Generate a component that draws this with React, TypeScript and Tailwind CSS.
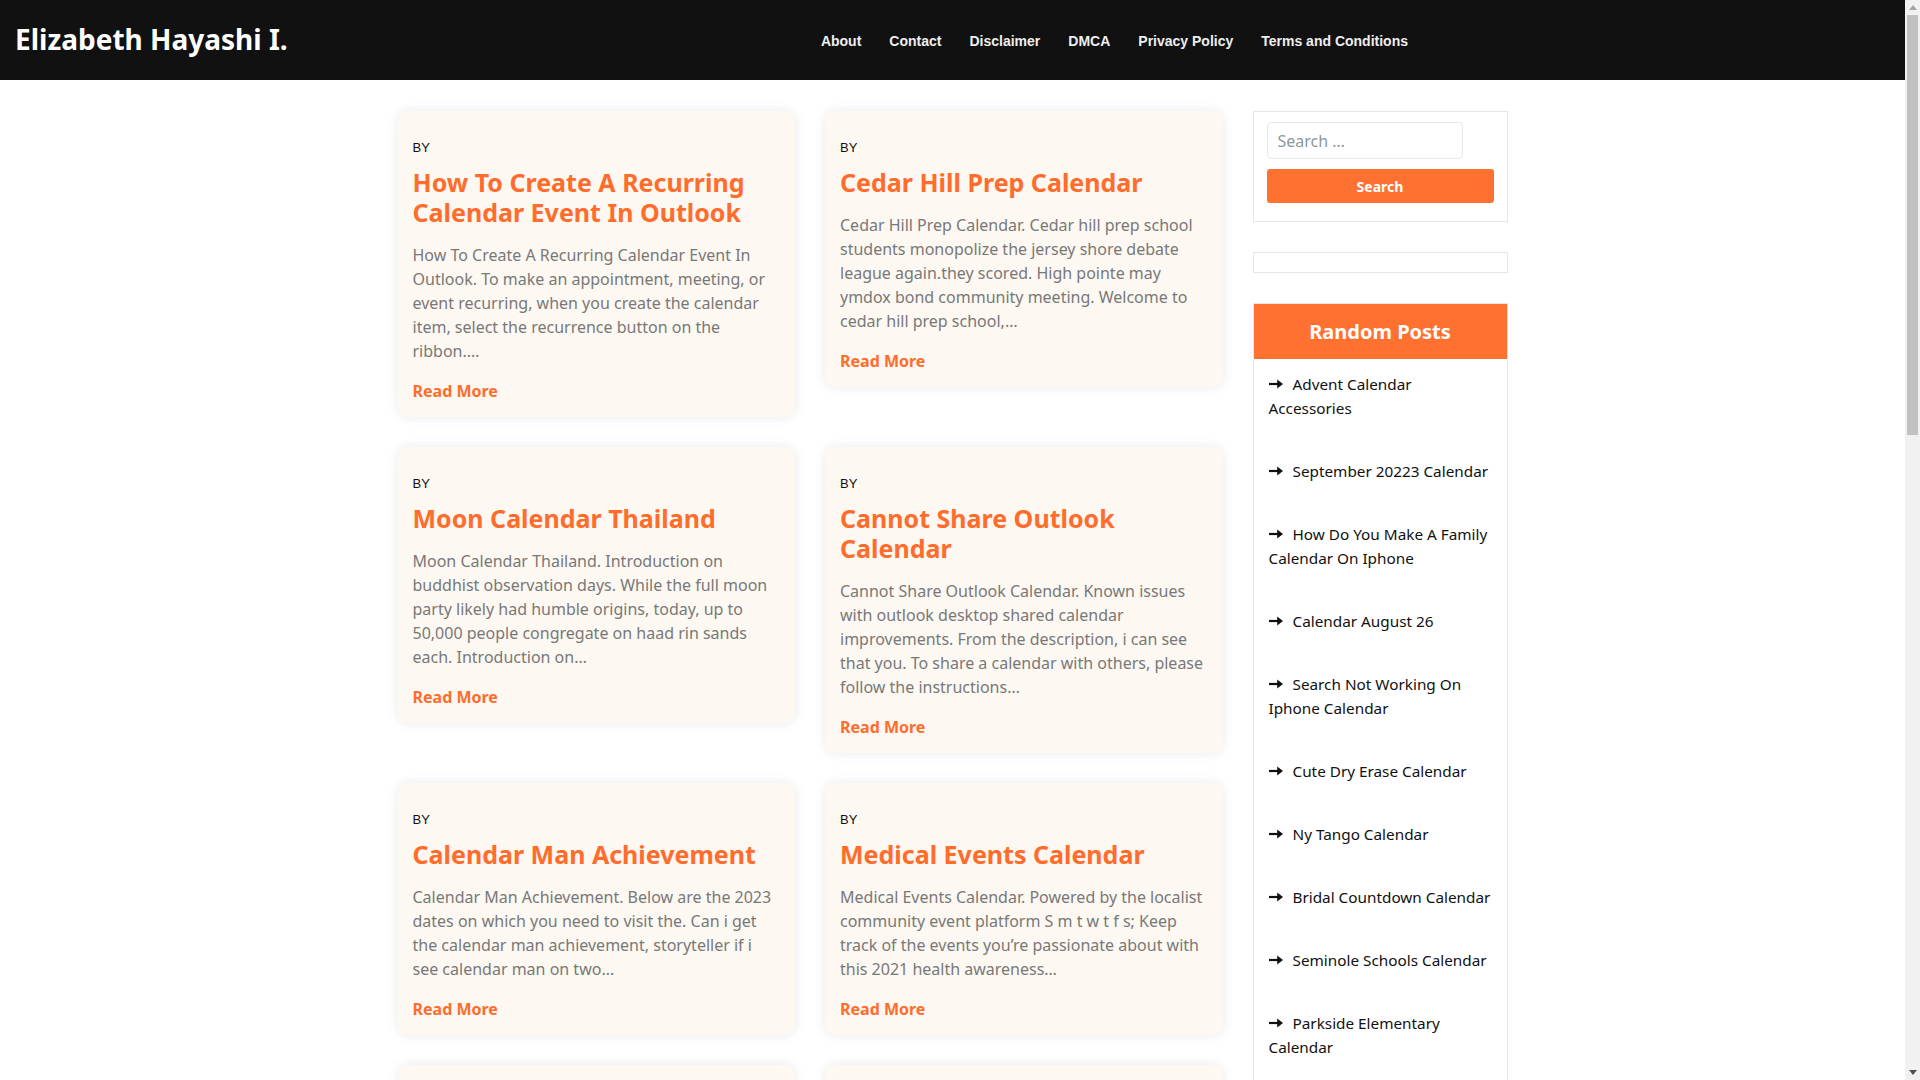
import React from 'react'

type Post = {
  title: string
  excerpt: string
}

const posts: Post[] = [
  {
    title: 'How To Create A Recurring Calendar Event In Outlook',
    excerpt:
      'How To Create A Recurring Calendar Event In Outlook. To make an appointment, meeting, or event recurring, when you create the calendar item, select the recurrence button on the ribbon.…',
  },
  {
    title: 'Cedar Hill Prep Calendar',
    excerpt:
      'Cedar Hill Prep Calendar. Cedar hill prep school students monopolize the jersey shore debate league again.they scored. High pointe may ymdox bond community meeting. Welcome to cedar hill prep school,…',
  },
  {
    title: 'Moon Calendar Thailand',
    excerpt:
      'Moon Calendar Thailand. Introduction on buddhist observation days. While the full moon party likely had humble origins, today, up to 50,000 people congregate on haad rin sands each. Introduction on…',
  },
  {
    title: 'Cannot Share Outlook Calendar',
    excerpt:
      'Cannot Share Outlook Calendar. Known issues with outlook desktop shared calendar improvements. From the description, i can see that you. To share a calendar with others, please follow the instructions…',
  },
  {
    title: 'Calendar Man Achievement',
    excerpt:
      'Calendar Man Achievement. Below are the 2023 dates on which you need to visit the. Can i get the calendar man achievement, storyteller if i see calendar man on two…',
  },
  {
    title: 'Medical Events Calendar',
    excerpt:
      'Medical Events Calendar. Powered by the localist community event platform S m t w t f s; Keep track of the events you’re passionate about with this 2021 health awareness…',
  },
  {
    title: 'Free Printable Monthly Calendar',
    excerpt:
      'Free Printable Monthly Calendar. Download and print a blank calendar for any month of the year, with holidays and week numbers included for easy planning…',
  },
  {
    title: 'School Holiday Calendar 2024',
    excerpt:
      'School Holiday Calendar 2024. Check the term dates and school holidays for the coming year so you can plan family trips and activities ahead of time…',
  },
]

const randomPosts = [
  'Advent Calendar Accessories',
  'September 20223 Calendar',
  'How Do You Make A Family Calendar On Iphone',
  'Calendar August 26',
  'Search Not Working On Iphone Calendar',
  'Cute Dry Erase Calendar',
  'Ny Tango Calendar',
  'Bridal Countdown Calendar',
  'Seminole Schools Calendar',
  'Parkside Elementary Calendar',
  'Lunar Calendar June 2024',
]

const navLinks = ['About', 'Contact', 'Disclaimer', 'DMCA', 'Privacy Policy', 'Terms and Conditions']

function ArrowIcon() {
  return (
    <svg width="14" height="10" viewBox="0 0 14 10" className="inline-block align-[1px] mr-[10px]">
      <rect x="0" y="3.9" width="9" height="2.2" fill="#111" />
      <path d="M8.2 0.6 L14 5 L8.2 9.4 Z" fill="#111" />
    </svg>
  )
}

// stand-in for the browser's classic scrollbar seen in the screenshot
function Scrollbar() {
  return (
    <div className="fixed top-0 right-0 flex h-screen w-[15px] flex-col bg-[#f1f1f1]">
      <div className="flex h-[15px] items-center justify-center">
        <svg width="8" height="5" viewBox="0 0 8 5">
          <path d="M0 5 L4 0 L8 5 Z" fill="#a3a3a3" />
        </svg>
      </div>
      <div className="mx-[2px] h-[420px] bg-[#c1c1c1]"></div>
      <div className="flex-1"></div>
      <div className="flex h-[15px] items-center justify-center">
        <svg width="8" height="5" viewBox="0 0 8 5">
          <path d="M0 0 L4 5 L8 0 Z" fill="#505050" />
        </svg>
      </div>
    </div>
  )
}

function PostCard({ post }: { post: Post }) {
  return (
    <article className="rounded-[10px] bg-[#fdf8f2] px-[15px] pt-[27px] pb-[14px] shadow-[0_0_12px_rgba(0,0,0,0.09)]">
      <div className="text-[13px] leading-[20px] text-[#111] font-['Liberation_Sans',Arial,sans-serif]">BY</div>
      <h2 className="mt-[9px] text-[25px] leading-[30px] font-bold text-[#ff6c2c]">{post.title}</h2>
      <p className="mt-[16px] text-[16px] leading-[24px] text-[#787878]">{post.excerpt}</p>
      <a href="#" className="mt-[16px] block text-[16px] leading-[24px] font-bold text-[#ff6c2c]">
        Read More
      </a>
    </article>
  )
}

export default function App() {
  return (
    <div className="min-h-screen bg-white font-['Noto_Sans',sans-serif]">
      <div className="mr-[15px]">
        {/* Header */}
        <header className="flex h-[80px] items-center bg-[#111111] px-[15px]">
          <a href="#" className="-mt-[2px] text-[28px] font-bold leading-none text-white">
            Elizabeth Hayashi I.
          </a>
          <nav className="ml-auto mr-[468px] flex pt-[2px] font-['Liberation_Sans',Arial,sans-serif]">
            {navLinks.map(link => (
              <a key={link} href="#" className="px-[14px] text-[14px] font-bold text-[#eeeeee]">
                {link}
              </a>
            ))}
          </nav>
        </header>

        {/* Content */}
        <div className="mx-auto flex w-[1110px] gap-[30px] pt-[31px] pb-[60px]">
          {/* Posts */}
          <main className="grid w-[825px] shrink-0 grid-cols-2 items-start gap-[30px]">
            {posts.map(post => (
              <PostCard key={post.title} post={post} />
            ))}
          </main>

          {/* Sidebar */}
          <aside className="flex-1 space-y-[30px]">
            <div className="border border-[#e6e6ec] px-[13px] pt-[10px] pb-[18px]">
              <input
                type="search"
                placeholder="Search …"
                className="block h-[37px] w-[196px] rounded-[4px] border border-[#e6e6ec] px-[10px] text-[16px] text-[#333] placeholder:text-[#8d979c] outline-none"
              />
              <button className="mt-[10px] block h-[34px] w-full rounded-[3px] bg-[#ff7131] text-[14px] font-bold text-white">
                Search
              </button>
            </div>

            <div className="h-[21px] border border-[#e6e6ec]"></div>

            <div className="border border-[#e6e6ec]">
              <div className="flex h-[55px] items-center justify-center bg-[#ff7131]">
                <h3 className="text-[20px] font-bold text-white">Random Posts</h3>
              </div>
              <ul className="flex flex-col gap-[39px] pl-[15px] pr-[12px] pt-[13px] pb-[30px]">
                {randomPosts.map(item => (
                  <li key={item} className="text-[15.3px] leading-[24px] text-[#111]">
                    <ArrowIcon />
                    {item}
                  </li>
                ))}
              </ul>
            </div>
          </aside>
        </div>
      </div>
      <Scrollbar />
    </div>
  )
}
